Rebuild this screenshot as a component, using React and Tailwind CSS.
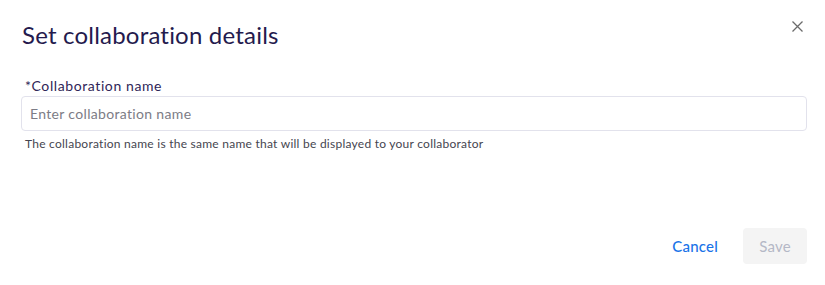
import React from "react";

export default function App() {
  return (
    <div className="w-[825px] h-[285px] bg-white relative" style={{ fontFamily: "Lato, 'Noto Sans', sans-serif" }}>
      <button className="absolute right-[22px] top-[20px] w-[12px] h-[12px] flex items-center justify-center text-[#6b6b6b]">
        <svg width="11" height="11" viewBox="0 0 11 11" fill="none" stroke="currentColor" strokeWidth="1.3">
          <path d="M0.5 0.5 L10.5 10.5 M10.5 0.5 L0.5 10.5" />
        </svg>
      </button>
      <div className="flex flex-col h-full pl-[21px] pr-[18px]">
        <h1 className="pt-[21px] text-[24px] leading-[28px] tracking-[0.2px] text-[#241a4d] pl-px">Set collaboration details</h1>
        <div className="mt-[28px] flex flex-col">
          <label className="text-[14px] leading-[18px] tracking-[0.6px] text-[#2f2658] pl-[4px]">*Collaboration name</label>
          <input
            className="mt-[1px] h-[35px] w-full rounded-[4px] border border-[#e2e2ec] px-[8px] text-[14px] tracking-[0.33px] text-[#333] placeholder:text-[#7c7c86] outline-none"
            placeholder="Enter collaboration name"
          />
          <p className="mt-[5px] pl-[4px] text-[12px] leading-[16px] tracking-[0.25px] text-[#45454f]">
            The collaboration name is the same name that will be displayed to your collaborator
          </p>
        </div>
        <div className="mt-auto mb-[21px] flex items-center justify-end gap-[25px]">
          <button className="text-[15px] text-[#1a73e8] font-medium tracking-[0.2px]">Cancel</button>
          <button className="h-[36px] w-[64px] rounded-[4px] bg-[#f4f4f4] text-[15px] text-[#b4b8c6] tracking-[0.2px]">Save</button>
        </div>
      </div>
    </div>
  );
}
